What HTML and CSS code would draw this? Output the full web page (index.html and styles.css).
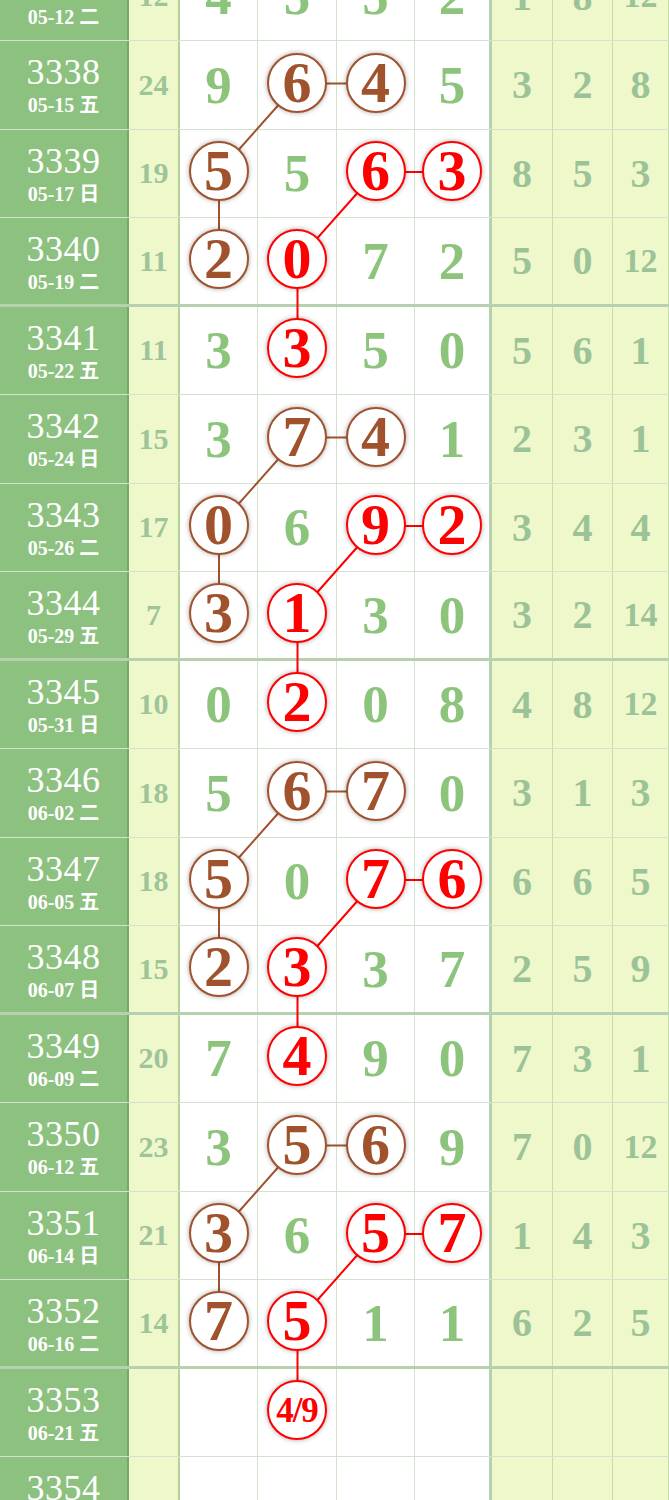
FILE: index.html
```html
<!DOCTYPE html>
<html lang="zh-CN">
<head>
    <meta charset="UTF-8">
    <title>走势图</title>
    <link rel="stylesheet" href="styles.css">
</head>
<body>
<div class="chart">
    <svg class="links" width="669" height="1593" viewBox="0 0 669 1593">
        <g stroke="#a0522d" stroke-width="2" fill="none" transform="translate(0,-2)">
            <path d="M297.5 132.5H376M297.5 132.5L219 221M219 221V309.5"/>
            <path d="M297.5 486.5H376M297.5 486.5L219 575M219 575V663.5"/>
            <path d="M297.5 840.5H376M297.5 840.5L219 929M219 929V1017.5"/>
            <path d="M297.5 1194.5H376M297.5 1194.5L219 1283M219 1283V1371.5"/>
        </g>
        <g stroke="#ff0000" stroke-width="2" fill="none" transform="translate(0,-2)">
            <path d="M376 221H453.5M376 221L297.5 309.5M297.5 309.5V398"/>
            <path d="M376 575H453.5M376 575L297.5 663.5M297.5 663.5V752"/>
            <path d="M376 929H453.5M376 929L297.5 1017.5M297.5 1017.5V1106"/>
            <path d="M376 1283H453.5M376 1283L297.5 1371.5M297.5 1371.5V1460"/>
        </g>
    </svg>

    <div class="row">
        <div class="no"><b>3337</b><span>05-12 二</span></div>
        <div class="sum">12</div>
        <div class="d">4</div><div class="d">5</div><div class="d">5</div><div class="d">2</div>
        <div class="r">1</div><div class="r">8</div><div class="r sm">12</div>
    </div>
    <div class="row">
        <div class="no"><b>3338</b><span>05-15 五</span></div>
        <div class="sum">24</div>
        <div class="d">9</div><div class="d"><i class="ball br">6</i></div><div class="d"><i class="ball br">4</i></div><div class="d">5</div>
        <div class="r">3</div><div class="r">2</div><div class="r">8</div>
    </div>
    <div class="row">
        <div class="no"><b>3339</b><span>05-17 日</span></div>
        <div class="sum">19</div>
        <div class="d"><i class="ball br">5</i></div><div class="d">5</div><div class="d"><i class="ball rd">6</i></div><div class="d"><i class="ball rd">3</i></div>
        <div class="r">8</div><div class="r">5</div><div class="r">3</div>
    </div>
    <div class="row sep">
        <div class="no"><b>3340</b><span>05-19 二</span></div>
        <div class="sum">11</div>
        <div class="d"><i class="ball br">2</i></div><div class="d"><i class="ball rd">0</i></div><div class="d">7</div><div class="d">2</div>
        <div class="r">5</div><div class="r">0</div><div class="r sm">12</div>
    </div>
    <div class="row">
        <div class="no"><b>3341</b><span>05-22 五</span></div>
        <div class="sum">11</div>
        <div class="d">3</div><div class="d"><i class="ball rd">3</i></div><div class="d">5</div><div class="d">0</div>
        <div class="r">5</div><div class="r">6</div><div class="r">1</div>
    </div>
    <div class="row">
        <div class="no"><b>3342</b><span>05-24 日</span></div>
        <div class="sum">15</div>
        <div class="d">3</div><div class="d"><i class="ball br">7</i></div><div class="d"><i class="ball br">4</i></div><div class="d">1</div>
        <div class="r">2</div><div class="r">3</div><div class="r">1</div>
    </div>
    <div class="row">
        <div class="no"><b>3343</b><span>05-26 二</span></div>
        <div class="sum">17</div>
        <div class="d"><i class="ball br">0</i></div><div class="d">6</div><div class="d"><i class="ball rd">9</i></div><div class="d"><i class="ball rd">2</i></div>
        <div class="r">3</div><div class="r">4</div><div class="r">4</div>
    </div>
    <div class="row sep">
        <div class="no"><b>3344</b><span>05-29 五</span></div>
        <div class="sum">7</div>
        <div class="d"><i class="ball br">3</i></div><div class="d"><i class="ball rd">1</i></div><div class="d">3</div><div class="d">0</div>
        <div class="r">3</div><div class="r">2</div><div class="r sm">14</div>
    </div>
    <div class="row">
        <div class="no"><b>3345</b><span>05-31 日</span></div>
        <div class="sum">10</div>
        <div class="d">0</div><div class="d"><i class="ball rd">2</i></div><div class="d">0</div><div class="d">8</div>
        <div class="r">4</div><div class="r">8</div><div class="r sm">12</div>
    </div>
    <div class="row">
        <div class="no"><b>3346</b><span>06-02 二</span></div>
        <div class="sum">18</div>
        <div class="d">5</div><div class="d"><i class="ball br">6</i></div><div class="d"><i class="ball br">7</i></div><div class="d">0</div>
        <div class="r">3</div><div class="r">1</div><div class="r">3</div>
    </div>
    <div class="row">
        <div class="no"><b>3347</b><span>06-05 五</span></div>
        <div class="sum">18</div>
        <div class="d"><i class="ball br">5</i></div><div class="d">0</div><div class="d"><i class="ball rd">7</i></div><div class="d"><i class="ball rd">6</i></div>
        <div class="r">6</div><div class="r">6</div><div class="r">5</div>
    </div>
    <div class="row sep">
        <div class="no"><b>3348</b><span>06-07 日</span></div>
        <div class="sum">15</div>
        <div class="d"><i class="ball br">2</i></div><div class="d"><i class="ball rd">3</i></div><div class="d">3</div><div class="d">7</div>
        <div class="r">2</div><div class="r">5</div><div class="r">9</div>
    </div>
    <div class="row">
        <div class="no"><b>3349</b><span>06-09 二</span></div>
        <div class="sum">20</div>
        <div class="d">7</div><div class="d"><i class="ball rd">4</i></div><div class="d">9</div><div class="d">0</div>
        <div class="r">7</div><div class="r">3</div><div class="r">1</div>
    </div>
    <div class="row">
        <div class="no"><b>3350</b><span>06-12 五</span></div>
        <div class="sum">23</div>
        <div class="d">3</div><div class="d"><i class="ball br">5</i></div><div class="d"><i class="ball br">6</i></div><div class="d">9</div>
        <div class="r">7</div><div class="r">0</div><div class="r sm">12</div>
    </div>
    <div class="row">
        <div class="no"><b>3351</b><span>06-14 日</span></div>
        <div class="sum">21</div>
        <div class="d"><i class="ball br">3</i></div><div class="d">6</div><div class="d"><i class="ball rd">5</i></div><div class="d"><i class="ball rd">7</i></div>
        <div class="r">1</div><div class="r">4</div><div class="r">3</div>
    </div>
    <div class="row sep">
        <div class="no"><b>3352</b><span>06-16 二</span></div>
        <div class="sum">14</div>
        <div class="d"><i class="ball br">7</i></div><div class="d"><i class="ball rd">5</i></div><div class="d">1</div><div class="d">1</div>
        <div class="r">6</div><div class="r">2</div><div class="r">5</div>
    </div>
    <div class="row">
        <div class="no"><b>3353</b><span>06-21 五</span></div>
        <div class="sum"></div>
        <div class="d"></div><div class="d"><i class="ball rd small">4/9</i></div><div class="d"></div><div class="d"></div>
        <div class="r"></div><div class="r"></div><div class="r"></div>
    </div>
    <div class="row">
        <div class="no"><b>3354</b><span>06-23 日</span></div>
        <div class="sum"></div>
        <div class="d"></div><div class="d"></div><div class="d"></div><div class="d"></div>
        <div class="r"></div><div class="r"></div><div class="r"></div>
    </div>
</div>
</body>
</html>
```

FILE: styles.css
```css
/*reset*/
*{
    box-sizing: border-box;
}
body{
    margin: 0;
    padding: 0;
    background: #fff;
    font-family: "Liberation Serif","Noto Sans CJK SC",serif;
}
/*chart*/
.chart{
    position: relative;
    width: 669px;
    margin-top: -47.5px;
}
.links{
    position: absolute;
    top: 0;
    left: 0;
    z-index: 1;
    pointer-events: none;
}
.row{
    display: grid;
    grid-template-columns: 129px 51px 78px 79px 78px 77px 61px 60px 56px;
    height: 88.5px;
    border-bottom: 1px solid rgba(95,150,80,.28);
}
.row.sep{
    border-bottom: 3px solid rgba(95,150,80,.45);
}
.row>div{
    display: flex;
    align-items: center;
    justify-content: center;
    border-right: 1px solid rgba(95,150,80,.28);
}
.row>.no{
    flex-direction: column;
    justify-content: flex-start;
    padding-top: 14px;
    background: #8dc17f;
    color: #fff;
    border-right: 2px solid rgba(70,130,60,.35);
}
.no b{
    font-weight: normal;
    font-size: 36px;
    line-height: 34px;
    letter-spacing: .5px;
}
.no span{
    font-weight: bold;
    font-size: 20px;
    line-height: 22px;
    margin-top: 5px;
}
.row>.sum{
    background: #eff8cb;
    color: #9ec49a;
    font-weight: bold;
    font-size: 30px;
    border-right: 2px solid rgba(95,150,80,.4);
}
.d{
    color: #8cc47c;
    font-weight: bold;
    font-size: 53px;
}
.row>.d:nth-child(6){
    border-right: 3px solid rgba(95,150,80,.45);
}
.r{
    background: #eff8cb;
    color: #9cc397;
    font-weight: bold;
    font-size: 40px;
}
.r.sm{
    font-size: 34px;
}
/*balls*/
.ball{
    position: relative;
    z-index: 2;
    display: flex;
    align-items: center;
    justify-content: center;
    width: 60px;
    height: 60px;
    margin-bottom: 4px;
    border: 2px solid;
    border-radius: 50%;
    background: #fff;
    font-style: normal;
    font-weight: bold;
    font-size: 58px;
    line-height: 1;
    box-shadow: 0 0 5px rgba(0,0,0,.35);
}
.ball.br{
    color: #a0522d;
    border-color: #a0522d;
}
.ball.rd{
    color: #ff0000;
    border-color: #ff0000;
}
.ball.small{
    font-size: 35px;
    letter-spacing: -1px;
}
```
